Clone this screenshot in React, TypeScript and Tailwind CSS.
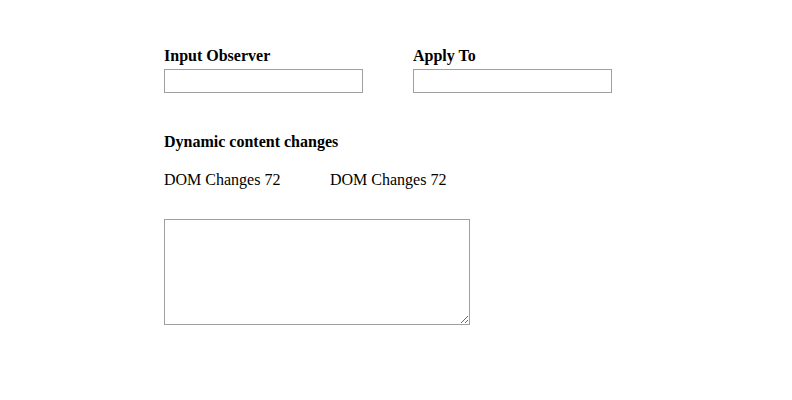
export default function App() {
  return (
    <div className="w-[792px] h-[400px] bg-white pl-[164px] pt-[47px] font-['Liberation_Serif',serif] text-black text-[16px]">
      <div className="flex">
        <div className="w-[249px]">
          <div className="font-bold leading-[18px]">Input Observer</div>
          <input type="text" className="mt-[4px] block w-[199px] h-[24px] border border-[#a0a0a0] bg-white outline-none" />
        </div>
        <div className="w-[249px]">
          <div className="font-bold leading-[18px]">Apply To</div>
          <input type="text" className="mt-[4px] block w-[199px] h-[24px] border border-[#a0a0a0] bg-white outline-none" />
        </div>
      </div>
      <div className="mt-[40px] font-bold leading-[18px]">Dynamic content changes</div>
      <div className="mt-[20px] flex leading-[18px]">
        <span className="w-[166px]">DOM Changes 72</span>
        <span>DOM Changes 72</span>
      </div>
      <textarea className="mt-[30px] block w-[306px] h-[106px] border border-[#a0a0a0] bg-white outline-none resize" />
    </div>
  )
}
